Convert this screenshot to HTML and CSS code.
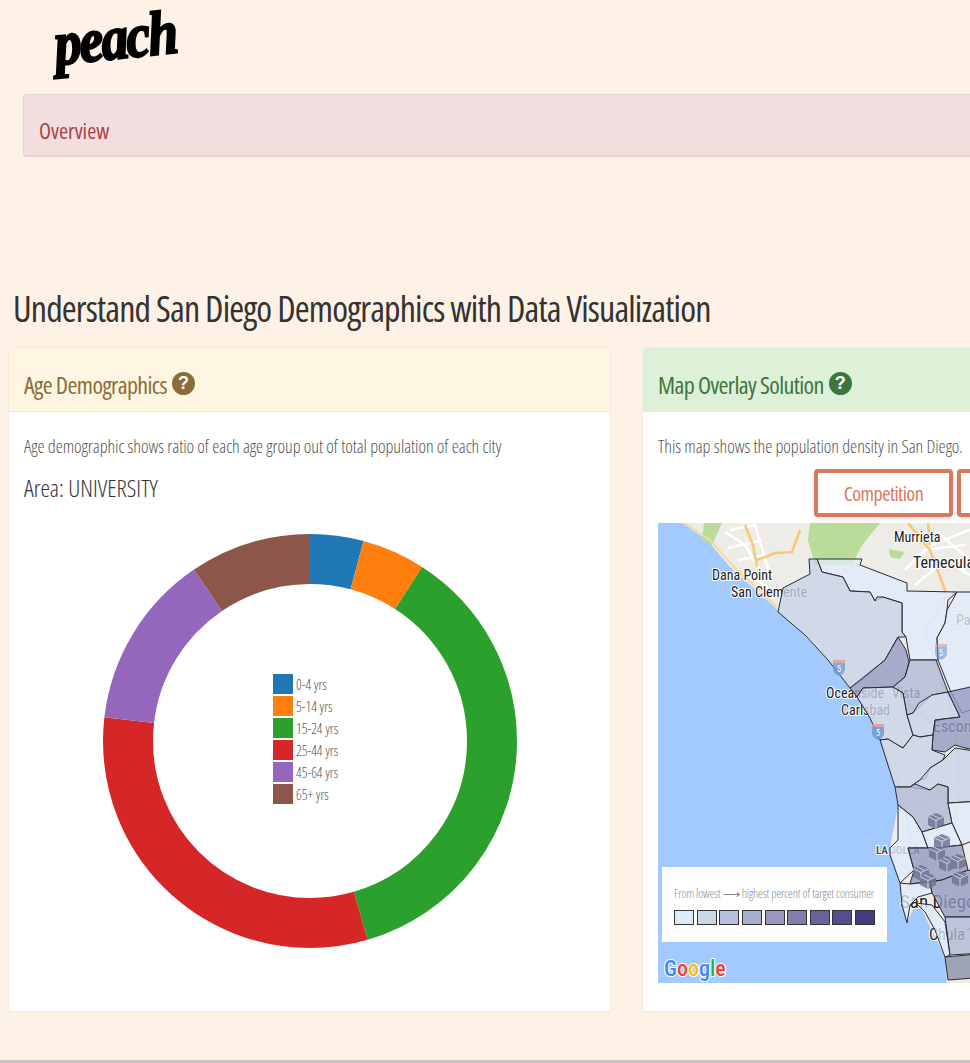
FILE: index.html
```html
<!DOCTYPE html>
<html lang="en">
<head>
    <meta charset="UTF-8">
    <meta name="viewport" content="width=device-width, initial-scale=1.0">
    <title>Peach</title>
    <link rel="stylesheet" href="styles.css">
</head>
<body>
    <div class="page">
        <header class="logo-bar">
            <span class="logo">peach</span>
        </header>
        <div class="overview-bar">Overview</div>
        <h1>Understand San Diego Demographics with Data Visualization</h1>

        <div class="cards">
            <section class="card">
                <div class="card-head head-yellow">
                    <h2>Age Demographics</h2>
                    <span class="help-icon">?</span>
                </div>
                <div class="card-body">
                    <p class="card-text">Age demographic shows ratio of each age group out of total population of each city</p>
                    <p class="area">Area: UNIVERSITY</p>
                    <div class="donut-wrap">
                        <svg class="donut" viewBox="0 0 420 420" width="420" height="420">
                            <g fill="none" stroke-width="50" transform="rotate(-90 210 210)">
                                <circle cx="210" cy="210" r="182" pathLength="360" stroke="#1f77b4" stroke-dasharray="15 345"/>
                                <circle cx="210" cy="210" r="182" pathLength="360" stroke="#ff7f0e" stroke-dasharray="17.8 342.2" stroke-dashoffset="-15"/>
                                <circle cx="210" cy="210" r="182" pathLength="360" stroke="#2ca02c" stroke-dasharray="131 229" stroke-dashoffset="-32.8"/>
                                <circle cx="210" cy="210" r="182" pathLength="360" stroke="#d62728" stroke-dasharray="112.8 247.2" stroke-dashoffset="-163.8"/>
                                <circle cx="210" cy="210" r="182" pathLength="360" stroke="#9467bd" stroke-dasharray="49.3 310.7" stroke-dashoffset="-276.6"/>
                                <circle cx="210" cy="210" r="182" pathLength="360" stroke="#8c564b" stroke-dasharray="34.1 325.9" stroke-dashoffset="-325.9"/>
                            </g>
                        </svg>
                        <ul class="donut-legend">
                            <li><span class="swatch age-1"></span>0-4 yrs</li>
                            <li><span class="swatch age-2"></span>5-14 yrs</li>
                            <li><span class="swatch age-3"></span>15-24 yrs</li>
                            <li><span class="swatch age-4"></span>25-44 yrs</li>
                            <li><span class="swatch age-5"></span>45-64 yrs</li>
                            <li><span class="swatch age-6"></span>65+ yrs</li>
                        </ul>
                    </div>
                </div>
            </section>

            <section class="card">
                <div class="card-head head-green">
                    <h2>Map Overlay Solution</h2>
                    <span class="help-icon">?</span>
                </div>
                <div class="card-body">
                    <p class="card-text">This map shows the population density in San Diego.</p>
                    <div class="map-buttons">
                        <button class="map-button">Competition</button>
                        <button class="map-button">&nbsp;</button>
                    </div>
                    <div class="map">
                        <svg class="map-svg" viewBox="658 523 571 460" width="571" height="460">
                            <defs>
                                <g id="box">
                                    <path d="M0 -7 L8 -3.5 L8 5 L0 9 L-8 5 L-8 -3.5 Z" fill="#6f7593"/>
                                    <path d="M-8 -3.5 L0 0.5 L8 -3.5 M0 0.5 V9 M-4 -5.2 L4 -1.4" fill="none" stroke="#d5d8e6" stroke-width="1"/>
                                </g>
                                <g id="shield">
                                    <path d="M-6 -6 H6 V2 C6 6 2 8 0 9 C-2 8 -6 6 -6 2 Z" fill="#6c9bd6"/>
                                    <rect x="-6" y="-7" width="12" height="3" fill="#d99"/>
                                    <text class="shield-text" x="0" y="5">5</text>
                                </g>
                            </defs>

                            <!-- land, parks and roads under the overlay -->
                            <path class="land" d="M682 523 L707 540 L730 567 L778 610 L805 636 L828 660 L850 688 L863 703 L873 723 L883 743 L895 787 L898 805 L890 848 L900 883 L907 923 L917 900 L945 957 L947 983 L1229 983 L1229 523 Z"/>
                            <path class="park" d="M810 523 L880 523 L862 545 L852 565 L815 565 L808 540 Z"/>
                            <path class="park" d="M704 523 L722 523 L712 545 L702 540 Z"/>
                            <path class="park" d="M889 549 L905 552 L900 559 L890 557 Z"/>
                            <path class="road-white" d="M725 532 L745 545 L760 570 M730 530 L755 525 L770 575 M728 548 L762 540 M738 560 L765 555 M745 570 L770 590"/>
                            <path class="road-white" d="M905 570 L925 550 L965 545 M915 585 L945 560 L970 575 M935 530 L970 560 M930 545 L970 530"/>
                            <path class="road-coast" d="M684 523 L710 540 L733 566 L777 607"/>
                            <path class="road-orange" d="M745 525 L753 545 L757 567"/>
                            <path class="road-orange" d="M757 560 L775 553 L792 552 L800 530"/>
                            <path class="road-orange" d="M908 523 L930 550 L945 590 L945 600"/>
                            <path class="road-orange" d="M928 523 L930 545"/>
                            <path class="road-pale" d="M945 600 L925 630 L938 670 L955 720 L960 780 L955 830"/>
                            <path class="road-pale" d="M885 750 L900 790 L912 840 L935 880 M905 810 L955 790 M893 690 L935 725"/>

                            <text class="place" x="712" y="580">Dana Point</text>
                            <text class="place" x="731" y="597">San Clemente</text>
                            <text class="place" x="894" y="542">Murrieta</text>
                            <text class="place place-big" x="913" y="568">Temecula</text>
                            <text class="place" x="826" y="698">Oceanside</text>
                            <text class="place" x="892" y="698">Vista</text>
                            <text class="place" x="841" y="715">Carlsbad</text>
                            <text class="place place-big" x="933" y="732">Escondido</text>
                            <text class="place" x="956" y="625">Pala</text>
                            <text class="place place-small" x="876" y="854">LA JOLLA</text>
                            <text class="place place-large" x="900" y="908">San Diego</text>
                            <text class="place place-big" x="929" y="940">Chula Vista</text>

                            <!-- census areas -->
                            <g class="areas">
                                <path class="s1" d="M817 559 L862 559 L860 565 L907 583 L907 591 L957 592 L948 600 L947 610 L945 623 L937 638 L938 660 L910 660 L906 637 L902 632 L902 603 L883 597 L875 601 L870 592 L850 591 L843 577 L822 572 Z"/>
                                <path class="s1" d="M957 592 L1000 592 L1000 700 L962 713 L950 690 L938 660 L937 638 L945 623 L947 610 Z"/>
                                <path class="s2" d="M778 612 L783 588 L810 574 L809 559 L817 559 L822 572 L843 577 L850 591 L870 592 L875 601 L877 597 L883 597 L902 603 L902 632 L906 637 L898 637 L885 660 L862 680 L850 688 L828 660 L805 635 Z"/>
                                <path class="s4" d="M850 688 L885 660 L898 637 L906 650 L909 662 L905 677 L893 687 L863 688 L857 697 Z"/>
                                <path class="s3" d="M893 687 L905 677 L910 660 L936 660 L948 692 L932 695 L913 713 L907 715 L903 693 Z"/>
                                <path class="s2" d="M857 697 L863 688 L893 687 L903 693 L907 715 L913 735 L903 748 L897 745 L888 739 L880 740 L870 718 Z"/>
                                <path class="s2" d="M907 715 L913 713 L919 703 L932 695 L948 692 L960 717 L935 720 L933 735 L920 737 L913 735 Z"/>
                                <path class="s4" d="M948 692 L975 686 L1000 690 L1000 755 L965 748 L955 745 L945 752 L932 750 L933 735 L935 720 L960 717 Z"/>
                                <path class="s2" d="M880 740 L888 739 L903 748 L913 735 L920 737 L933 735 L932 750 L945 755 L943 760 L930 768 L926 778 L920 780 L910 787 L895 787 Z"/>
                                <path class="s2" d="M910 787 L920 780 L930 768 L943 760 L955 748 L1000 755 L1000 800 L948 803 L948 787 L938 784 L930 790 Z"/>
                                <path class="s3" d="M895 787 L910 787 L915 784 L930 790 L938 784 L948 787 L948 803 L952 823 L922 832 L913 817 L898 805 Z"/>
                                <path class="s1" d="M948 803 L1000 800 L1000 830 L962 845 L952 823 Z"/>
                                <path class="s1" d="M898 805 L913 817 L922 832 L928 848 L908 848 L914 870 L900 883 L890 855 L890 848 L898 840 Z"/>
                                <path class="s1" d="M922 832 L952 823 L962 845 L935 848 L928 848 Z"/>
                                <path class="s4" d="M908 848 L935 848 L962 845 L968 870 L942 880 L910 884 L914 870 Z"/>
                                <path class="s1" d="M900 883 L910 884 L930 882 L932 893 L918 897 L910 905 L907 923 L902 905 Z"/>
                                <path class="s4" d="M930 882 L942 880 L968 870 L1000 880 L1000 917 L945 917 L932 893 Z"/>
                                <path class="s1" d="M916 903 L932 905 L945 922 L950 955 L945 957 L935 930 L925 912 Z"/>
                                <path class="s3" d="M945 917 L1000 917 L1000 952 L950 955 Z"/>
                                <path class="s5" d="M945 957 L1000 952 L1000 976 L948 980 Z"/>
                            </g>

                            <use href="#shield" x="839" y="667" opacity="0.75"/>
                            <use href="#shield" x="878" y="731" opacity="0.85"/>
                            <use href="#shield" x="941" y="651" opacity="0.6"/>
                            <g opacity="0.85">
                                <use href="#box" x="936" y="820"/>
                                <use href="#box" x="942" y="841"/>
                                <use href="#box" x="937" y="852"/>
                                <use href="#box" x="947" y="863"/>
                                <use href="#box" x="958" y="861"/>
                                <use href="#box" x="960" y="878"/>
                                <use href="#box" x="921" y="872"/>
                                <use href="#box" x="928" y="880"/>
                            </g>

                            <text class="google" x="664" y="976"><tspan fill="#4285f4">G</tspan><tspan fill="#ea4335">o</tspan><tspan fill="#fbbc05">o</tspan><tspan fill="#4285f4">g</tspan><tspan fill="#34a853">l</tspan><tspan fill="#ea4335">e</tspan></text>
                        </svg>
                        <div class="map-legend">
                            <div class="map-legend-text">From lowest ⟶ highest percent of target consumer</div>
                            <div class="map-legend-row">
                                <span class="step step-1"></span>
                                <span class="step step-2"></span>
                                <span class="step step-3"></span>
                                <span class="step step-4"></span>
                                <span class="step step-5"></span>
                                <span class="step step-6"></span>
                                <span class="step step-7"></span>
                                <span class="step step-8"></span>
                                <span class="step step-9"></span>
                            </div>
                        </div>
                    </div>
                </div>
            </section>
        </div>
        <div class="page-line"></div>
    </div>
</body>
</html>
```

FILE: styles.css
```css
html, body {
    margin: 0;
    padding: 0;
    height: 100%;
    overflow: hidden;
}

body {
    background-color: #fef2e6;
    color: #333;
    font-family: "Open Sans", "Liberation Sans", sans-serif;
    font-stretch: 75%;
}

.page {
    width: 1260px;
}

/* top of the page */
.logo-bar {
    height: 94px;
    padding-left: 54px;
}

.logo {
    display: inline-block;
    margin-top: 8px;
    color: #000;
    font-family: "Liberation Serif", serif;
    font-size: 54px;
    font-style: italic;
    font-weight: bold;
    line-height: 60px;
    letter-spacing: -2px;
    -webkit-text-stroke: 2px #000;
    transform: rotate(-6deg) scaleY(1.15);
}

.overview-bar {
    margin: 0 0 132px 23px;
    height: 60px;
    line-height: 70px;
    padding-left: 15px;
    background-color: #f2dede;
    border: 1px solid #ebcfd1;
    border-bottom-width: 2px;
    border-radius: 4px;
    color: #a94442;
    font-size: 22px;
}

h1 {
    margin: 0 0 18px 13px;
    color: #333;
    font-size: 36px;
    font-weight: 400;
    letter-spacing: -0.85px;
    line-height: 40px;
}

.cards {
    display: flex;
    gap: 31px;
    margin-left: 8px;
}

.card {
    flex: none;
    width: 601px;
    height: 663px;
    background-color: #fff;
    border: 1px solid #f3ece0;
    border-bottom-width: 2px;
    border-radius: 4px;
}

.card-head {
    display: flex;
    align-items: center;
    gap: 5px;
    height: 53px;
    padding: 10px 0 0 15px;
    border-radius: 4px 4px 0 0;
}

.card-head h2 {
    margin: 0;
    font-size: 24px;
    font-weight: 400;
    letter-spacing: -0.6px;
}

.head-yellow {
    background-color: #fff6e2;
    border-bottom: 1px solid #f3ead6;
    color: #8a6d3b;
}

.head-green {
    background-color: #dff0d8;
    border-bottom: 1px solid #dff0d8;
    color: #3c763d;
}

.help-icon {
    display: flex;
    align-items: center;
    justify-content: center;
    width: 23px;
    height: 23px;
    margin-top: -3px;
    border-radius: 50%;
    color: #fff;
    font-family: "Liberation Sans", sans-serif;
    font-size: 18px;
    font-weight: bold;
}

.head-yellow .help-icon {
    background-color: #8a6d3b;
}

.head-green .help-icon {
    background-color: #3c763d;
}

.card-body {
    padding: 0 15px;
}

.card-text {
    margin: 0;
    padding-top: 23px;
    color: #555;
    font-size: 18px;
    font-weight: 300;
    letter-spacing: -0.05px;
    line-height: 22px;
}

.area {
    margin: 18px 0 0;
    color: #333;
    font-size: 24px;
    font-weight: 300;
    line-height: 26px;
}

/* donut chart */
.donut-wrap {
    position: relative;
    width: 420px;
    height: 420px;
    margin: 30px 0 0 76px;
}

.donut {
    display: block;
}

.donut-legend {
    position: absolute;
    top: 142px;
    left: 173px;
    margin: 0;
    padding: 0;
    list-style: none;
    color: #555;
    font-size: 14px;
    font-weight: 300;
}

.donut-legend li {
    display: flex;
    align-items: center;
    gap: 3px;
    height: 22px;
}

.swatch {
    width: 20px;
    height: 20px;
}

.age-1 { background-color: #1f77b4; }
.age-2 { background-color: #ff7f0e; }
.age-3 { background-color: #2ca02c; }
.age-4 { background-color: #d62728; }
.age-5 { background-color: #9467bd; }
.age-6 { background-color: #8c564b; }

/* map card */
.map-buttons {
    display: flex;
    gap: 4px;
    height: 48px;
    padding: 12px 0 6px 156px;
}

.map-button {
    width: 139px;
    height: 48px;
    padding: 0;
    background-color: #fff;
    border: 4px solid #d9785f;
    border-radius: 4px;
    box-shadow: 0 2px 4px rgba(0, 0, 0, 0.12);
    color: #d9785f;
    font-family: inherit;
    font-size: 20px;
    font-stretch: 75%;
    letter-spacing: -0.5px;
}

.map {
    position: relative;
    width: 571px;
    height: 460px;
    background-color: #a2caff;
    overflow: hidden;
}

.map-svg {
    display: block;
}

.land { fill: #eeece6; }
.park { fill: #b9dc9a; }
.road-white { fill: none; stroke: #fff; stroke-width: 2.5; }
.road-orange { fill: none; stroke: #f6c877; stroke-width: 2.5; }
.road-coast { fill: none; stroke: #f3d9a0; stroke-width: 2; }
.road-pale { fill: none; stroke: #ddd; stroke-width: 3; }

.place {
    fill: #222;
    font-family: Roboto, sans-serif;
    font-size: 14px;
    paint-order: stroke;
    stroke: #fff;
    stroke-width: 2px;
}

.place-big {
    font-size: 16px;
}

.place-large {
    font-size: 19px;
}

.place-small {
    font-size: 11px;
    font-weight: bold;
    fill: #555;
}

.areas path {
    stroke: #2a2a33;
    stroke-width: 1;
    fill-opacity: 0.78;
}

.s1 { fill: #dfeafa; }
.s2 { fill: #c8d4e8; }
.s3 { fill: #b0b9d6; }
.s4 { fill: #9399c2; }
.s5 { fill: #8890a8; }

.shield-text {
    fill: #fff;
    font-family: Roboto, sans-serif;
    font-size: 9px;
    text-anchor: middle;
}

.google {
    font-family: Roboto, sans-serif;
    font-size: 22px;
    font-weight: 500;
    paint-order: stroke;
    stroke: #fff;
    stroke-width: 2px;
}

.map-legend {
    position: absolute;
    left: 4px;
    top: 344px;
    width: 201px;
    height: 75px;
    padding: 0 12px;
    background-color: #fff;
}

.map-legend-text {
    padding-top: 19px;
    color: #888;
    font-size: 12px;
    font-weight: 300;
    letter-spacing: -0.1px;
    line-height: 16px;
    white-space: nowrap;
}

.map-legend-row {
    display: flex;
    justify-content: space-between;
    margin-top: 8px;
}

.step {
    width: 18px;
    height: 13px;
    border: 1px solid #333;
}

.step-1 { background-color: #e0ebf8; }
.step-2 { background-color: #ccd7e8; }
.step-3 { background-color: #b7c1dc; }
.step-4 { background-color: #a5aecd; }
.step-5 { background-color: #9699bd; }
.step-6 { background-color: #7f80b0; }
.step-7 { background-color: #66659a; }
.step-8 { background-color: #514f8c; }
.step-9 { background-color: #403c7e; }

.page-line {
    margin-top: 47px;
    height: 3px;
    background-color: #c4c4c4;
}
```
